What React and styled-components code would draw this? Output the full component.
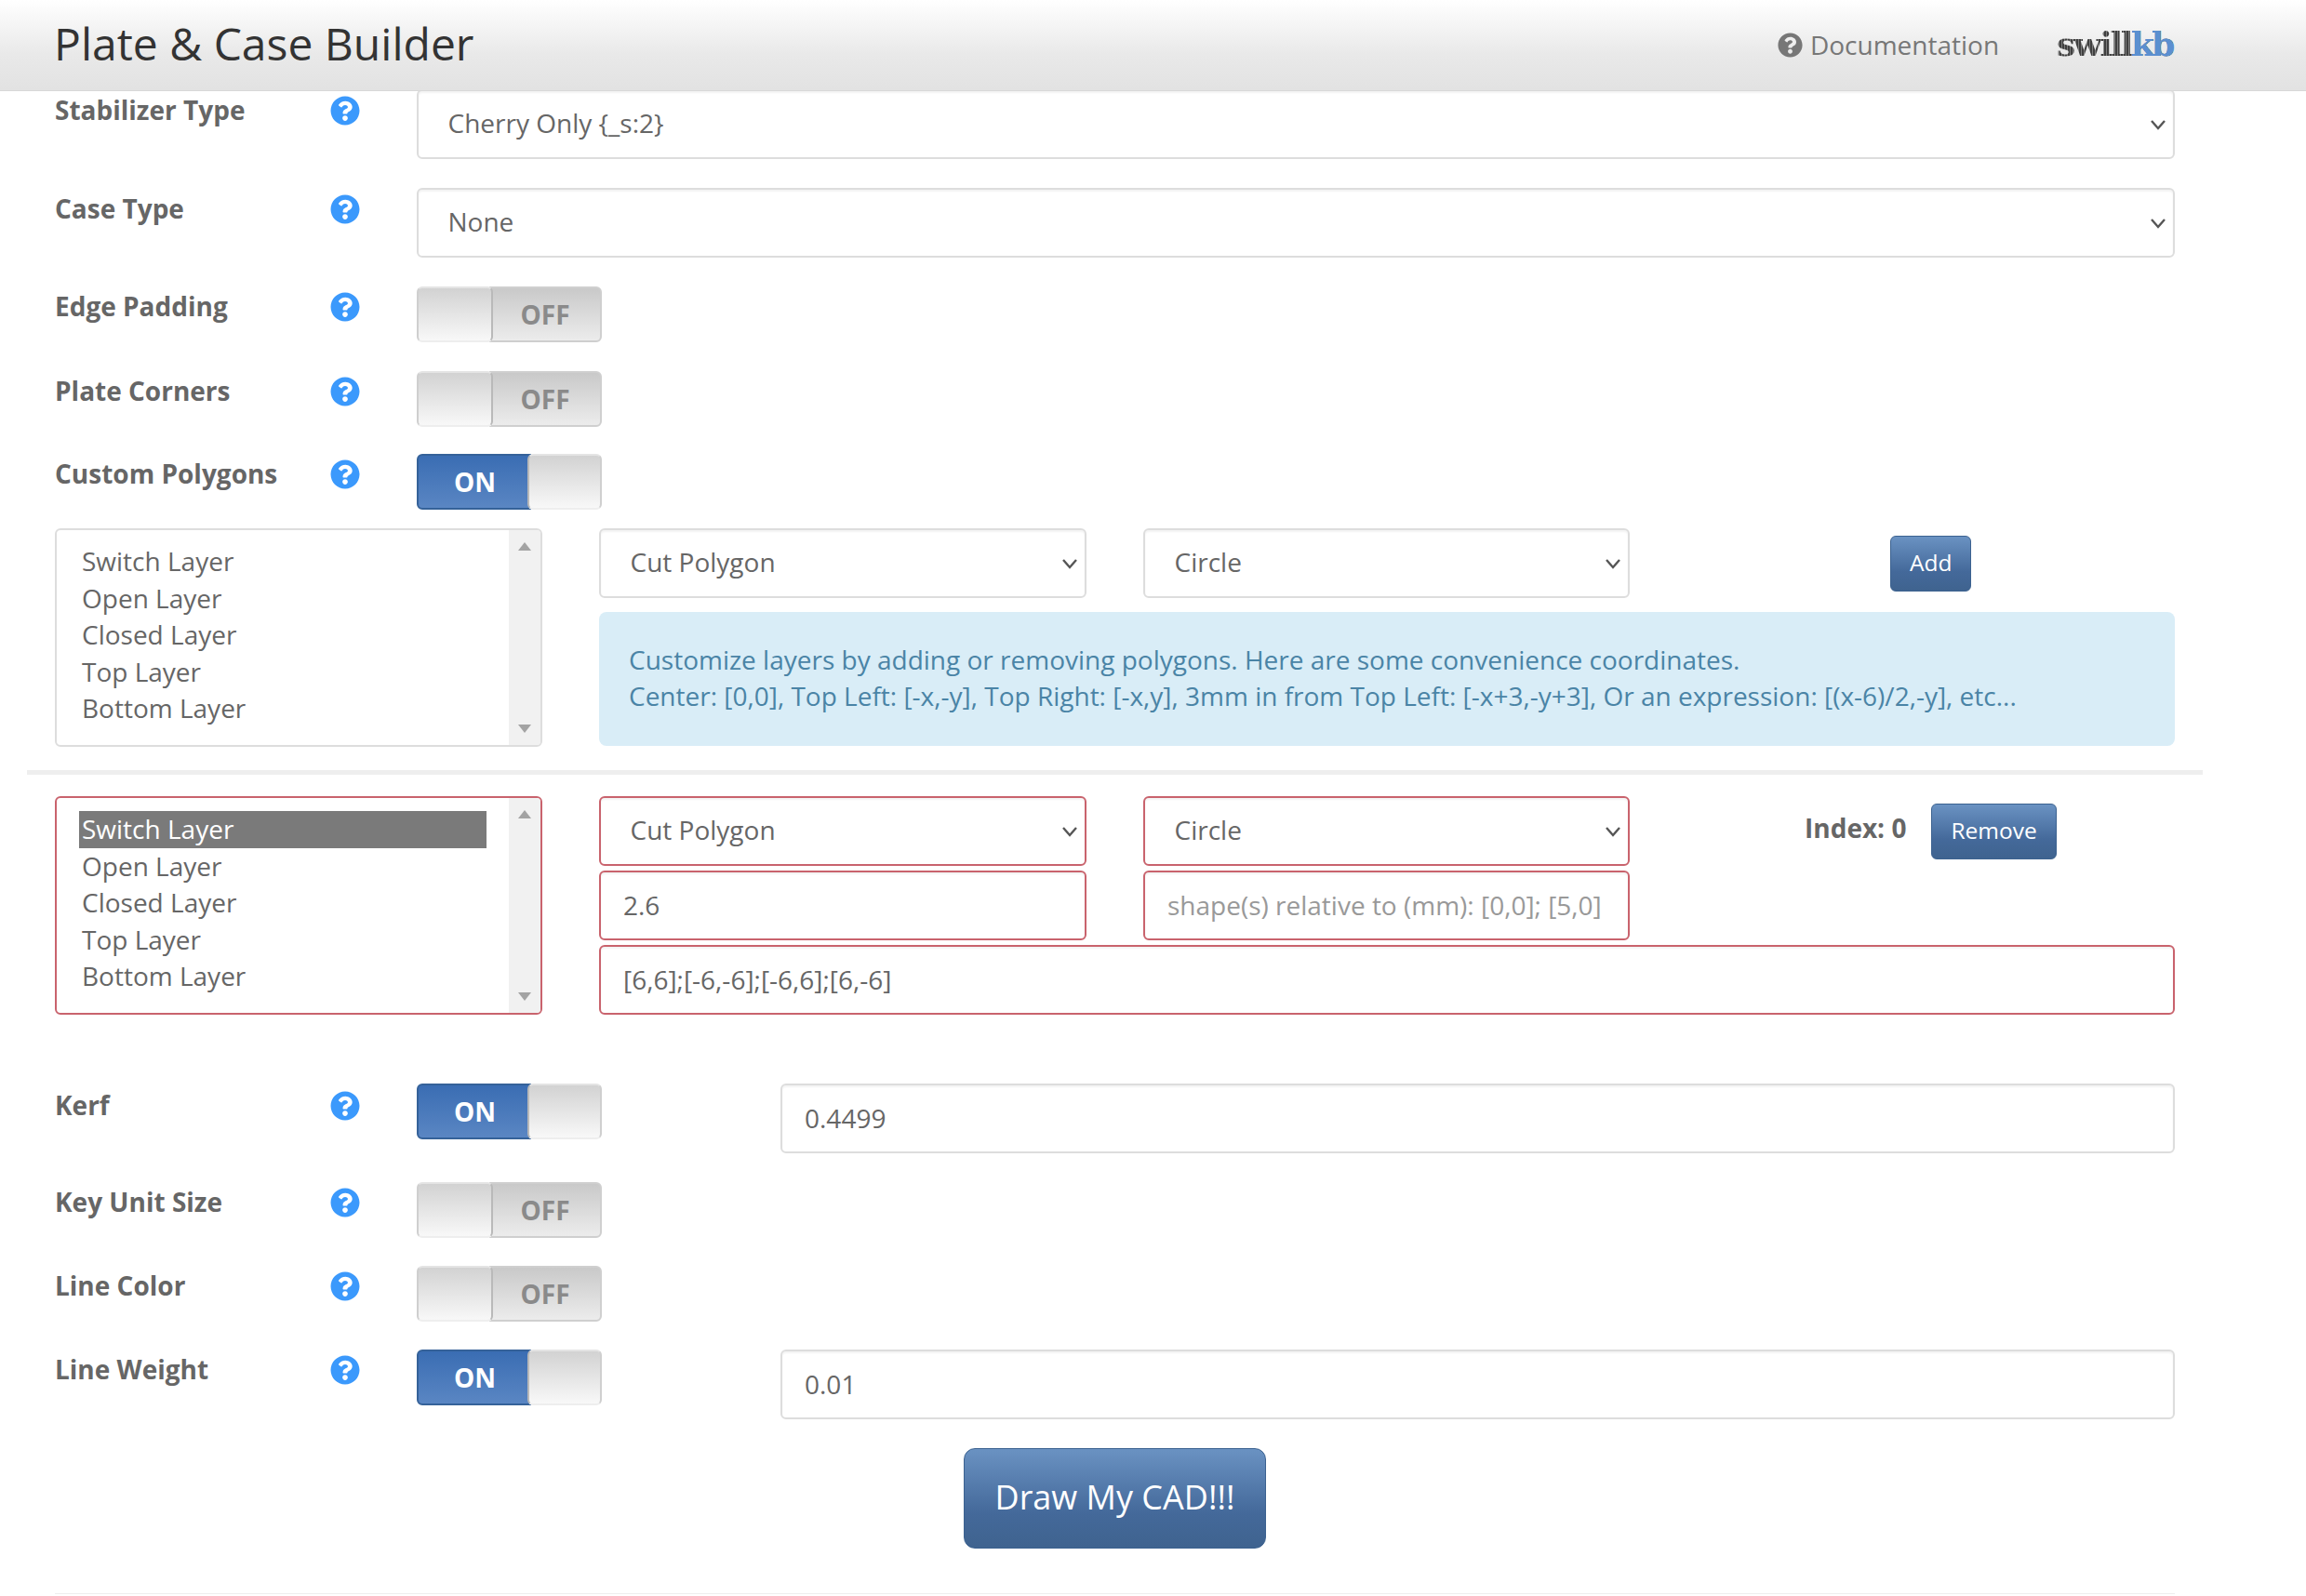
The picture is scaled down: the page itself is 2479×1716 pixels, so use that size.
import React from "react"
import styled, { createGlobalStyle } from "styled-components"
import { FaQuestionCircle } from "react-icons/fa"

const GlobalStyle = createGlobalStyle`
  html, body {
    margin: 0;
    background: #fff;
    font-family: "Open Sans", sans-serif;
    font-size: 28px;
    line-height: 39.4px;
    color: #555;
  }
  * {
    box-sizing: border-box;
  }
`

const Header = styled.header`
  position: relative;
  z-index: 2;
  height: 98px;
  padding: 0 141px 0 58px;
  display: flex;
  align-items: center;
  background: linear-gradient(to bottom, #ffffff 0%, #e9e9e9 60%, #e2e2e2 100%);
  border-bottom: 1px solid #d8d8d8;
`

const Title = styled.h1`
  flex: 1;
  margin: 0 0 4px;
  font-size: 48px;
  line-height: 60px;
  font-weight: 400;
  color: #333;
`

const DocLink = styled.a`
  display: flex;
  align-items: center;
  gap: 8px;
  margin-right: 62px;
  color: #777;
  font-size: 28px;
  svg {
    width: 27px;
    height: 27px;
  }
`

const Logo = styled.div`
  font-family: "DejaVu Serif", serif;
  font-weight: 700;
  font-size: 36px;
  letter-spacing: -2.5px;
  line-height: 40px;
  margin: 0 2px 4px 0;
  color: transparent;
  background: repeating-linear-gradient(90deg, #3f3f3f 0 2px, #7d7d7d 2px 3px);
  background-clip: text;
  span {
    color: #5b8fd0;
  }
`

const Page = styled.main`
  margin-top: -2px;
  padding: 0 141px 0 59px;
`

const Row = styled.div`
  display: grid;
  grid-template-columns: 296px 93px 1fr;
  margin-top: ${(p) => p.$top || 0}px;
`

const Label = styled.label`
  font-weight: 700;
  color: #666;
  padding-top: ${(p) => p.$pad || 2}px;
`

const Help = styled.span`
  display: block;
  padding-top: ${(p) => (p.$pad || 2) + 4}px;
  color: #3b99fc;
  line-height: 0;
  svg {
    width: 32px;
    height: 32px;
  }
`

const Control = styled.div`
  display: flex;
  align-items: flex-start;
`

const SelectWrap = styled.div`
  position: relative;
  width: 100%;
`

const Select = styled.select`
  appearance: none;
  display: block;
  width: 100%;
  height: 75px;
  padding: 0 50px 1px 31.5px;
  background: #fff;
  border: 2px solid ${(p) => (p.$error ? "#c9636d" : "#ddd")};
  border-radius: 6px;
  box-shadow: inset 0 2px 2px rgba(0, 0, 0, 0.05);
  font: inherit;
  color: #666;
`

const Chevron = styled.svg`
  position: absolute;
  right: 9px;
  top: 50%;
  width: 18px;
  height: 12px;
  margin-top: -6px;
  pointer-events: none;
`

const Field = styled.input`
  display: block;
  width: 100%;
  height: 75px;
  padding: 0 24px 1px;
  background: #fff;
  border: 2px solid ${(p) => (p.$error ? "#c9636d" : "#ddd")};
  border-radius: 6px;
  box-shadow: inset 0 2px 2px rgba(0, 0, 0, 0.05);
  font: inherit;
  color: #666;
  &::placeholder {
    color: #999;
    opacity: 1;
  }
`

const SideField = styled.div`
  flex: 1;
  margin-left: 192px;
`

const Switch = styled.div`
  display: flex;
  flex: none;
  width: 199px;
  height: 60px;
  font-weight: 700;
`

const SwitchKnob = styled.div`
  flex: none;
  width: ${(p) => (p.$on ? 80 : 82)}px;
  margin-${(p) => (p.$on ? "left" : "right")}: -4px;
  position: relative;
  background: linear-gradient(to bottom, #d2d2d2, #f8f8f8);
  border: 2px solid #cfcfcf;
  border-${(p) => (p.$on ? "left" : "right")}-color: #b9b9b9;
  border-top-color: #e4e4e4;
  border-bottom-color: #eee;
  border-radius: 6px;
`

const SwitchSide = styled.div`
  flex: 1;
  display: flex;
  align-items: center;
  justify-content: center;
  border: 2px solid ${(p) => (p.$on ? "#356299" : "#cfcfcf")};
  border-radius: ${(p) => (p.$on ? "6px 0 0 6px" : "0 6px 6px 0")};
  padding-top: 2px;
  padding-${(p) => (p.$on ? "left" : "right")}: ${(p) => (p.$on ? 2 : 1)}px;
  color: ${(p) => (p.$on ? "#fff" : "#8a8a8a")};
  background: ${(p) =>
    p.$on
      ? "linear-gradient(to bottom, #3a6db3, #5a86c3)"
      : "linear-gradient(to bottom, #c9c9c9, #ececec)"};
`

const PolyRow = styled.div`
  display: flex;
  gap: 61px;
  margin-top: ${(p) => p.$top || 0}px;
`

const ListBox = styled.div`
  flex: none;
  display: flex;
  width: 524px;
  height: 235px;
  background: #fff;
  border: 2px solid ${(p) => (p.$error ? "#c9636d" : "#ddd")};
  border-radius: 6px;
  overflow: hidden;
  color: #666;
`

const Options = styled.div`
  flex: 1;
  padding: 14px 24px;
`

const Option = styled.div`
  height: 39.5px;
  padding-left: 3px;
  background: ${(p) => (p.$selected ? "#7a7a7a" : "transparent")};
  color: ${(p) => (p.$selected ? "#fff" : "#666")};
`

const ScrollTrack = styled.div`
  flex: none;
  width: 34px;
  padding: 13px 0;
  display: flex;
  flex-direction: column;
  justify-content: space-between;
  align-items: center;
  background: #f1f1f1;
`

const ScrollArrow = styled.div`
  width: 0;
  height: 0;
  border-left: 7px solid transparent;
  border-right: 7px solid transparent;
  border-${(p) => (p.$down ? "top" : "bottom")}: 9px solid #a3a3a3;
`

const PolyFields = styled.div`
  flex: 1;
  display: grid;
  grid-template-columns: 524px 523px 1fr;
  column-gap: 61px;
  row-gap: ${(p) => p.$gap}px;
  align-content: start;
`

const Wide = styled.div`
  grid-column: 1 / -1;
`

const Button = styled.button`
  height: ${(p) => (p.$big ? 108 : 60)}px;
  padding: 0 ${(p) => (p.$big ? 33 : 20)}px 3px;
  border: 1px solid #3c6290;
  border-radius: ${(p) => (p.$big ? 12 : 6)}px;
  background: linear-gradient(to bottom, #6a92c2 0%, #44699a 65%, #3f638f 100%);
  font-family: inherit;
  font-size: ${(p) => (p.$big ? 36 : 24.5)}px;
  color: #fff;
`

const AddCell = styled.div`
  padding: 8px 0 0 219px;
`

const IndexCell = styled.div`
  display: flex;
  align-items: center;
  gap: 27px;
  height: 75px;
  padding-left: 127px;
  font-weight: 700;
  color: #666;
  span {
    margin-bottom: 6px;
  }
`

const Alert = styled.div`
  grid-column: 1 / -1;
  height: 144px;
  padding: 32px;
  background: #d9edf7;
  border-radius: 8px;
  color: #4a84a6;
`

const Divider = styled.hr`
  height: 5px;
  margin: 25px -30px 23px;
  background: #eee;
  border: 0;
`

const DrawRow = styled.div`
  display: flex;
  justify-content: center;
  margin-top: 31px;
`

const BottomRule = styled.hr`
  height: 1px;
  margin: 48px 0 0;
  background: #eee;
  border: 0;
`

const layers = ["Switch Layer", "Open Layer", "Closed Layer", "Top Layer", "Bottom Layer"]

const Dropdown = ({ value, error }) => (
  <SelectWrap>
    <Select $error={error} defaultValue={value}>
      <option>{value}</option>
    </Select>
    <Chevron viewBox="0 0 18 12" fill="none" stroke="#555" strokeWidth="2.4">
      <path d="M2 2l7 8 7-8" />
    </Chevron>
  </SelectWrap>
)

const Layers = ({ error, selected }) => (
  <ListBox $error={error}>
    <Options>
      {layers.map((l, i) => (
        <Option key={l} $selected={selected && i === 0}>
          {l}
        </Option>
      ))}
    </Options>
    <ScrollTrack>
      <ScrollArrow />
      <ScrollArrow $down />
    </ScrollTrack>
  </ListBox>
)

const Toggle = ({ on }) => (
  <Switch>
    {on ? (
      <>
        <SwitchSide $on>ON</SwitchSide>
        <SwitchKnob $on />
      </>
    ) : (
      <>
        <SwitchKnob />
        <SwitchSide>OFF</SwitchSide>
      </>
    )}
  </Switch>
)

const FormRow = ({ label, top, pad, children }) => (
  <Row $top={top}>
    <Label $pad={pad}>{label}</Label>
    <Help $pad={pad}>
      <FaQuestionCircle />
    </Help>
    <Control>{children}</Control>
  </Row>
)

const App = () => (
  <>
    <GlobalStyle />
    <Header>
      <Title>Plate &amp; Case Builder</Title>
      <DocLink>
        <FaQuestionCircle />
        Documentation
      </DocLink>
      <Logo>
        swill<span>kb</span>
      </Logo>
    </Header>
    <Page>
      <FormRow label="Stabilizer Type" pad={3}>
        <Dropdown value="Cherry Only {_s:2}" />
      </FormRow>
      <FormRow label="Case Type" top={31} pad={3}>
        <Dropdown value="None" />
      </FormRow>
      <FormRow label="Edge Padding" top={31}>
        <Toggle />
      </FormRow>
      <FormRow label="Plate Corners" top={31}>
        <Toggle />
      </FormRow>
      <FormRow label="Custom Polygons" top={29}>
        <Toggle on />
      </FormRow>

      <PolyRow $top={20}>
        <Layers />
        <PolyFields $gap={15}>
          <Dropdown value="Cut Polygon" />
          <Dropdown value="Circle" />
          <AddCell>
            <Button>Add</Button>
          </AddCell>
          <Alert>
            Customize layers by adding or removing polygons. Here are some convenience coordinates.
            <br />
            Center: [0,0], Top Left: [-x,-y], Top Right: [-x,y], 3mm in from Top Left: [-x+3,-y+3], Or an expression: [(x-6)/2,-y], etc...
          </Alert>
        </PolyFields>
      </PolyRow>

      <Divider />

      <PolyRow>
        <Layers error selected />
        <PolyFields $gap={5}>
          <Dropdown value="Cut Polygon" error />
          <Dropdown value="Circle" error />
          <IndexCell>
            <span>Index: 0</span>
            <Button>Remove</Button>
          </IndexCell>
          <Field $error defaultValue="2.6" />
          <Field $error placeholder="shape(s) relative to (mm): [0,0]; [5,0]" />
          <div />
          <Wide>
            <Field $error defaultValue="[6,6];[-6,-6];[-6,6];[6,-6]" />
          </Wide>
        </PolyFields>
      </PolyRow>

      <FormRow label="Kerf" top={74} pad={4}>
        <Toggle on />
        <SideField>
          <Field defaultValue="0.4499" />
        </SideField>
      </FormRow>
      <FormRow label="Key Unit Size" top={31}>
        <Toggle />
      </FormRow>
      <FormRow label="Line Color" top={30}>
        <Toggle />
      </FormRow>
      <FormRow label="Line Weight" top={30}>
        <Toggle on />
        <SideField>
          <Field defaultValue="0.01" />
        </SideField>
      </FormRow>

      <DrawRow>
        <Button $big>Draw My CAD!!!</Button>
      </DrawRow>
      <BottomRule />
    </Page>
  </>
)

export default App
